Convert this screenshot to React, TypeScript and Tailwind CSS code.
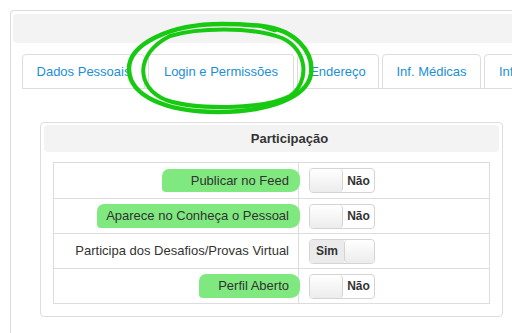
import React from 'react';

const tabs = [
  { label: 'Dados Pessoais', w: 'w-[123px]' },
  { label: 'Login e Permissões', w: 'w-[146px]', active: true },
  { label: 'Endereço', w: 'w-[82px]' },
  { label: 'Inf. Médicas', w: 'w-[99px]' },
  { label: 'Inf. Adicionais', w: 'w-[110px]' },
];

const rows = [
  { label: 'Publicar no Feed', on: false, mark: '-left-[29px]' },
  { label: 'Aparece no Conheça o Pessoal', on: false, mark: '-left-[9px]' },
  { label: 'Participa dos Desafios/Provas Virtual', on: true },
  { label: 'Perfil Aberto', on: false, mark: '-left-[19px]' },
];

function Toggle({ on }: { on: boolean }) {
  return (
    <div className="flex w-[66px] h-[25px] border border-[#d4d4d4] rounded-[4px] overflow-hidden bg-white">
      {on ? (
        <>
          <div className="w-[34px] bg-[#ebebeb] flex items-center justify-center text-[12px] font-bold text-[#333]">Sim</div>
          <div className="flex-1 bg-gradient-to-b from-white to-[#ececec] border-l border-[#d4d4d4] rounded-[4px]" />
        </>
      ) : (
        <>
          <div className="w-[33px] bg-gradient-to-b from-white to-[#ececec] border-r border-[#d4d4d4] rounded-[4px]" />
          <div className="flex-1 flex items-center justify-center text-[12px] font-bold text-[#333]">Não</div>
        </>
      )}
    </div>
  );
}

export default function App() {
  return (
    <div className="relative w-[512px] h-[333px] overflow-hidden bg-white font-['Liberation_Sans',Arial,sans-serif]">
      <div className="ml-[10px] mt-[10px] w-[560px] border-l border-t border-[#dddddd] rounded-tl-[4px] pl-[2px] pt-[3px] h-[340px]">
        <div className="h-[29px] bg-[#f3f3f3] rounded-l-[4px]" />

        <div className="mt-[11px] ml-[9px] flex gap-[3px] border-b border-[#dddddd] h-[35px] whitespace-nowrap">
          {tabs.map((t) => (
            <div
              key={t.label}
              className={`${t.w} shrink-0 flex items-center justify-center border border-[#dddddd] rounded-t-[4px] text-[13px] text-[#1c8fd6] bg-white ${t.active ? 'h-[36px] border-b-white' : 'h-[35px]'}`}
            >
              {t.label}
            </div>
          ))}
        </div>

        <div className="mt-[33px] ml-[27px] w-[463px] border border-[#dddddd] rounded-[4px] p-[3px] pt-[2px] pb-[12px]">
          <div className="h-[27px] bg-[#f3f3f3] rounded-[4px] flex items-center justify-center pl-[36px] text-[13px] font-bold text-[#333]">
            Participação
          </div>
          <div className="mt-[10px] mx-[9px] border border-[#dddddd]">
            {rows.map((r, i) => (
              <div key={r.label} className={`flex h-[35px] ${i > 0 ? 'border-t border-[#dddddd]' : ''}`}>
                <div className="w-[245px] flex items-center justify-end pr-[9px] border-r border-[#dddddd] text-[13px] text-[#333] whitespace-nowrap">
                  <span className="relative">
                    {r.mark && (
                      <span className={`absolute ${r.mark} -right-[11px] -top-[2px] -bottom-[2px] bg-[#7fe87f] rounded-l-[7px] rounded-r-[9px] rounded-bl-[4px]`} />
                    )}
                    <span className="relative">{r.label}</span>
                  </span>
                </div>
                <div className="flex items-center pl-[10px]">
                  <Toggle on={r.on} />
                </div>
              </div>
            ))}
          </div>
        </div>
      </div>

      {/* marker circle drawn over the active tab */}
      <svg className="absolute left-0 top-0 pointer-events-none" width="512" height="333" viewBox="0 0 512 333">
        <path
          d="M 262 26 C 296 30 314 52 311 74 C 307 98 268 112 218 112 C 166 112 130 96 129 70 C 128 44 170 24 222 24 C 240 24 252 25 262 26 L 275 30"
          fill="none"
          stroke="#17c910"
          strokeWidth="4.5"
          strokeLinecap="round"
        />
        <path
          d="M 170 36 C 196 28 250 26 282 38 C 308 50 310 82 290 96 C 262 110 196 110 166 100 C 136 88 134 54 170 36"
          fill="none"
          stroke="#17c910"
          strokeWidth="4"
          strokeLinecap="round"
        />
      </svg>
    </div>
  );
}
